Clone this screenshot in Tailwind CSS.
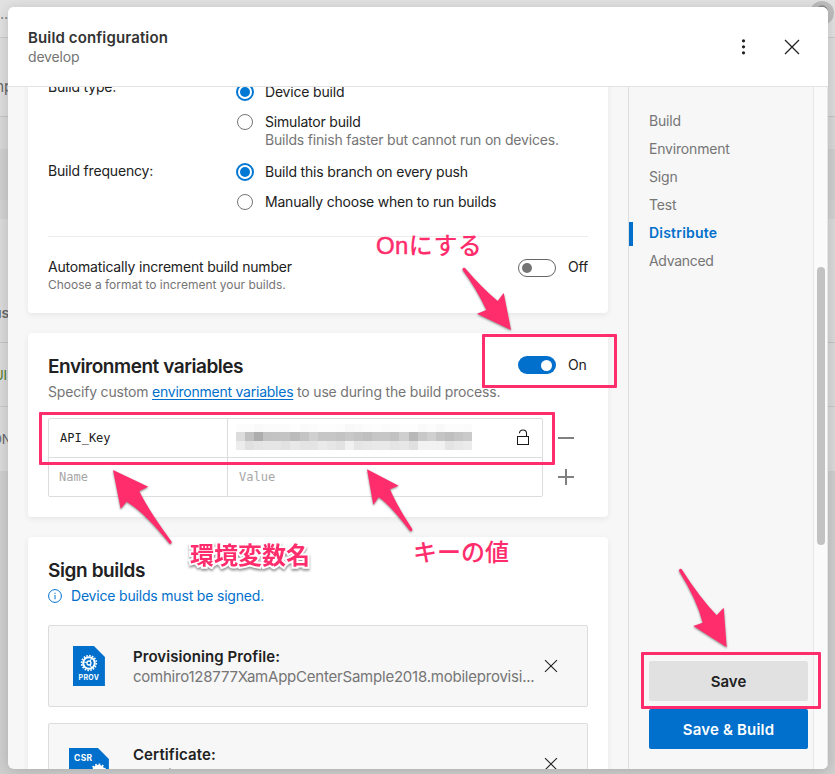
<!DOCTYPE html>
<html lang="ja">
<head>
<meta charset="utf-8">
<title>Build configuration</title>
<script src="https://cdn.jsdelivr.net/npm/@tailwindcss/browser@4"></script>
</head>
<body class="relative w-[835px] h-[774px] overflow-hidden bg-[#c9c9c9] font-['Inter','Noto_Sans_CJK_JP',sans-serif] text-[14px] leading-[18px] tracking-[-0.185px] text-[#212121]">

<!-- Dimmed page behind the dialog -->
<div class="flex flex-col h-full text-[#666]">
  <div class="h-[38px] bg-[#e2e2e2] border-b border-[#cbcbcb] pt-[5px] overflow-hidden"><span class="block -ml-[4px]">…</span></div>
  <div class="h-[79px] bg-[#dedede] border-b border-[#c6c6c6] pt-[40px] overflow-hidden"><span class="block -ml-[9px] text-[15px]">mp</span></div>
  <div class="h-[32px] bg-[#d9d9d9]"></div>
  <div class="h-[51px] bg-[#d0d0d0]"></div>
  <div class="h-[19px] bg-[#d3d3d3]"></div>
  <div class="h-[124px] bg-[#dbdbdb] border-b border-[#c4c4c4] pt-[85px] overflow-hidden"><span class="block -ml-[7px] font-semibold">us</span></div>
  <div class="h-[64px] bg-[#dbdbdb] border-b border-[#c8c8c8] pt-[23px] overflow-hidden"><span class="block -ml-[6px] text-[13px] text-[#4c7a20]">UI</span></div>
  <div class="h-[64px] bg-[#dbdbdb] pt-[23px] overflow-hidden"><span class="block -ml-[8px] text-[13px]">ON</span></div>
  <div class="grow bg-[#cfcfcf]"></div>
</div>
<svg class="absolute left-[811px] top-0" width="24" height="26" viewBox="0 0 24 26"><circle cx="11" cy="13" r="12" fill="#bdbdbd"/><circle cx="11" cy="11" r="5" fill="none" stroke="#8a8a8a" stroke-width="1.5"/></svg>

<!-- Dialog -->
<div class="absolute left-[8px] top-[7px] w-[820px] h-[762px] rounded-[6px] overflow-hidden bg-[#f7f7f7] flex flex-col shadow-[0_2px_14px_rgba(0,0,0,0.17)]">
  <header class="h-[80px] shrink-0 bg-white border-b border-[#e3e3e3] flex justify-between pl-[20px] pr-[28px]">
    <div class="pt-[21px]">
      <h1 class="text-[15px] leading-[20px] font-semibold tracking-[0.13px] text-[#333]">Build configuration</h1>
      <p class="text-[#757575]">develop</p>
    </div>
    <div class="flex items-center gap-[38px]">
      <svg width="5" height="16" viewBox="0 0 5 16" fill="#212121"><circle cx="2.5" cy="1.8" r="1.6"/><circle cx="2.5" cy="7.8" r="1.6"/><circle cx="2.5" cy="13.8" r="1.6"/></svg>
      <svg width="16" height="16" viewBox="0 0 16 16" stroke="#212121" stroke-width="1.3"><path d="M1 1L15 15M15 1L1 15"/></svg>
    </div>
  </header>

  <div class="flex grow min-h-0">
    <main class="w-[620px] overflow-hidden pl-[20px] pr-[20px] flex flex-col gap-[20px]">
      <!-- Build settings -->
      <section class="shrink-0 -mt-[20px] h-[246px] bg-white rounded-[4px] px-[20px] pt-[10px] shadow-[0_2px_6px_rgba(0,0,0,0.07)]">
        <div class="grid grid-cols-[188px_1fr] h-[80px]">
          <div class="pt-px">Build type:</div>
          <div>
            <div class="h-[30px] flex items-center gap-[11px]"><span class="w-[18px] h-[18px] rounded-full border-2 border-[#0078d4] p-[2px]"><span class="block size-full rounded-full bg-[#0078d4]"></span></span>Device build</div>
            <div class="h-[30px] flex items-center gap-[12px] pl-px"><span class="w-[16px] h-[16px] rounded-full border border-[#757575]"></span>Simulator build</div>
            <p class="pl-[29px] -mt-[6px] text-[#757575]">Builds finish faster but cannot run on devices.</p>
          </div>
        </div>
        <div class="grid grid-cols-[188px_1fr] h-[80px] border-b border-[#ececec]">
          <div class="pt-[5px]">Build frequency:</div>
          <div>
            <div class="h-[30px] flex items-center gap-[11px]"><span class="w-[18px] h-[18px] rounded-full border-2 border-[#0078d4] p-[2px]"><span class="block size-full rounded-full bg-[#0078d4]"></span></span>Build this branch on every push</div>
            <div class="h-[30px] flex items-center gap-[12px] pl-px tracking-[-0.21px]"><span class="w-[16px] h-[16px] rounded-full border border-[#757575]"></span>Manually choose when to run builds</div>
          </div>
        </div>
        <div class="flex justify-between pt-[21px]">
          <div>
            <div>Automatically increment build number</div>
            <p class="text-[12px] leading-[17px] tracking-[-0.01px] text-[#757575]">Choose a format to increment your builds.</p>
          </div>
          <div class="flex items-center h-[19px] gap-[12px] w-[70px]">
            <span class="w-[38px] h-[18px] shrink-0 rounded-full border border-[#666] flex items-center pl-[3px]"><span class="size-[10px] rounded-full bg-[#757575]"></span></span><span class="-mt-px">Off</span>
          </div>
        </div>
      </section>

      <!-- Environment variables -->
      <section class="shrink-0 h-[184px] bg-white rounded-[4px] px-[20px] shadow-[0_2px_6px_rgba(0,0,0,0.07)]">
        <div class="flex justify-between pt-[22px]">
          <h2 class="text-[19px] leading-[24px] font-semibold tracking-[-0.46px]">Environment variables</h2>
          <div class="flex items-center h-[20px] gap-[12px] w-[70px]">
            <span class="w-[38px] h-[18px] shrink-0 rounded-full bg-[#0070cc] flex items-center justify-end pr-[4px]"><span class="size-[11px] rounded-full bg-white"></span></span><span class="-mt-px">On</span>
          </div>
        </div>
        <p class="pt-[4px] text-[#757575]">Specify custom <a class="text-[#0070cc] underline underline-offset-2 tracking-[-0.24px]">environment variables</a> to use during the build process.</p>
        <div class="flex pt-[17px] font-['DejaVu_Sans_Mono',monospace] text-[12px] tracking-normal">
          <div class="w-[495px] border border-[#dcdcdc] rounded-[2px] grid grid-cols-[179px_1fr]">
            <div class="h-[39px] border-r border-b border-[#dcdcdc] pl-[11px] flex items-center">API_Key</div>
            <div class="h-[39px] border-b border-[#dcdcdc] pl-[8px] pr-[12px] flex items-center justify-between">
              <svg class="-mt-[2px]" width="254" height="27" viewBox="0 0 254 27" shape-rendering="crispEdges" id="mask"></svg>
              <svg class="-mt-px" width="14" height="17" viewBox="0 0 14 17" fill="none" stroke="#1a1a1a"><rect x="1.5" y="7.5" width="11" height="8"/><path d="M3.5 4.2C3.5 2.2 4.8 1 6.9 1S10.5 2.5 10.5 4.3V7.5" stroke-width="1.1"/></svg>
            </div>
            <div class="h-[38px] border-r border-[#dcdcdc] pl-[10px] flex items-center text-[#a6a6a6]">Name</div>
            <div class="h-[38px] pl-[11px] flex items-center text-[#a6a6a6]">Value</div>
          </div>
          <div class="pl-[15px] flex flex-col">
            <svg class="mt-[11px]" width="16" height="16" viewBox="0 0 16 16" stroke="#808080" stroke-width="2"><path d="M0 9H16"/></svg>
            <svg class="mt-[23px]" width="16" height="17" viewBox="0 0 16 17" stroke="#808080" stroke-width="2"><path d="M0 9H16M8 1V17"/></svg>
          </div>
        </div>
      </section>

      <!-- Signing -->
      <section class="shrink-0 h-[400px] bg-white rounded-[4px] px-[20px] pt-[22px] shadow-[0_2px_6px_rgba(0,0,0,0.07)]">
        <h2 class="text-[19px] leading-[24px] font-semibold tracking-[-0.4px]">Sign builds</h2>
        <div class="flex items-center gap-[9px] pt-[4px] text-[#0070cc]">
          <svg width="14" height="14" viewBox="0 0 14 14" fill="none" stroke="#0070cc"><circle cx="7" cy="7" r="6.4"/><path d="M7 6V10.3M7 3.7V4.9"/></svg>Device builds must be signed.
        </div>
        <div class="mt-[20px] h-[82px] rounded-[2px] border border-[#dcdcdc] bg-[#f7f7f7] flex items-center pl-[24px] pr-[29px]">
          <svg width="32" height="40" viewBox="0 0 32 40"><path d="M0 0H21L32 11V40H0Z" fill="#0070cc"/><g fill="none" stroke="#fff"><circle cx="16" cy="17" r="7.4" stroke-width="1.6" stroke-dasharray="1.6 1.3"/><circle cx="16" cy="17" r="5.8" stroke-width="2"/><circle cx="16" cy="17" r="2" stroke-width="1.3"/><path d="M11 16L14 16.5M17 15L19 12M17 19L19 22" stroke-width="1.1"/></g><text x="16" y="34" text-anchor="middle" font-family="Inter" font-size="7" font-weight="700" letter-spacing=".35" fill="#fff">PROV</text></svg>
          <div class="ml-[28px] pt-[2px] w-[403px] text-[15px] leading-[20px]">
            <div class="font-semibold tracking-[0.08px]">Provisioning Profile:</div>
            <div class="tracking-[-0.22px] whitespace-nowrap text-[#757575]">comhiro128777XamAppCenterSample2018.mobileprovisi...</div>
          </div>
          <svg class="ml-[9px]" width="14" height="14" viewBox="0 0 14 14" stroke="#212121" stroke-width="1.1"><path d="M1 1L13 13M13 1L1 13"/></svg>
        </div>
        <div class="mt-[16px] h-[82px] rounded-[2px] border border-[#dcdcdc] bg-[#f7f7f7] flex items-center pl-[20px] pr-[29px]">
          <svg class="mt-[4px]" width="40" height="36" viewBox="0 0 40 36"><path d="M0 0H29L40 11V36H0Z" fill="#0070cc"/><text x="5" y="12.5" font-family="Inter" font-size="8.5" font-weight="700" letter-spacing=".4" fill="#fff">CSR</text><circle cx="29.5" cy="23" r="6.2" fill="#fff"/><circle cx="29.5" cy="23" r="6.6" fill="none" stroke="#fff" stroke-width="2" stroke-dasharray="1.6 1.86"/></svg>
          <div class="ml-[24px] pt-[2px] w-[403px] text-[15px] leading-[20px]">
            <div class="font-semibold tracking-[0.12px]">Certificate:</div>
            <div class="pt-px -mb-px text-[#757575]">証明書.p12</div>
          </div>
          <svg class="ml-[9px]" width="14" height="14" viewBox="0 0 14 14" stroke="#212121" stroke-width="1.1"><path d="M1 1L13 13M13 1L1 13"/></svg>
        </div>
      </section>
    </main>

    <aside class="w-[185px] border-l border-[#dedede] flex flex-col justify-between pt-[20px] pb-[20px] text-[#757575]">
      <nav class="leading-[28px]">
        <div class="pl-[20px]">Build</div>
        <div class="pl-[20px]">Environment</div>
        <div class="pl-[20px]">Sign</div>
        <div class="pl-[20px]">Test</div>
        <div class="flex items-center font-semibold tracking-[0.22px] text-[#0070cc]"><span class="w-[4px] h-[24px] relative top-px bg-[#0070cc] mr-[16px]"></span>Distribute</div>
        <div class="pl-[20px] tracking-[-0.3px]">Advanced</div>
      </nav>
      <div class="flex flex-col gap-[8px] pl-[20px] pr-[5px] text-[15px] font-semibold">
        <button class="h-[40px] pt-[2px] rounded-[2px] bg-[#e1e1e1] text-[#212121] tracking-[0px]">Save</button>
        <button class="h-[40px] pt-[2px] rounded-[2px] bg-[#0070cc] text-white tracking-[0.17px]">Save &amp; Build</button>
      </div>
    </aside>
    <div class="w-[15px] border-x border-[#e6e6e6] bg-[#fafafa] pt-[180px] flex flex-col items-center">
      <div class="w-[8px] h-[278px] rounded-full bg-[#c2c2c2] ml-px"></div>
    </div>
  </div>
</div>

<!-- Annotations drawn over the dialog -->
<div class="absolute left-[482px] top-[334px] w-[135px] h-[54px] border-[3px] border-[#ff2d6c] rounded-[1px]"></div>
<div class="absolute left-[39px] top-[412px] w-[516px] h-[53px] border-[3px] border-[#ff2d6c] rounded-[1px]"></div>
<div class="absolute left-[641px] top-[652px] w-[180px] h-[57px] border-[3px] border-[#ff2d6c] rounded-[1px]"></div>
<svg class="absolute left-0 top-0 [filter:drop-shadow(0_1px_1px_rgba(0,0,0,0.45))]" width="835" height="774" viewBox="0 0 835 774" fill="#ff2d6c">
  <path d="M462.5 270Q462.5 267 465 268Q482 288 497.7 301L503.7 293L511 330L477 313.7L486.3 310Q476 288 462.5 270Z"/>
  <path d="M679 571Q679 568 681.5 569Q700 598 716.7 615.3L723.7 607.7L726.7 647.3L693.3 626L702.7 622.7Q697 600 679 571Z"/>
  <path d="M367 469.3L398.7 485.7L390 489.3Q396 504 412.3 529Q412.5 532 410 531Q390 505 378.7 497.3L373.3 505Z"/>
  <path d="M113 470L148.3 486.7L139.3 491.3Q149 511 171.5 541.5Q172 544.5 169.5 543.7Q145 513 126.7 501.7L120.7 509Z"/>
</svg>
<div class="absolute left-[376px] top-[229px] font-['Liberation_Sans','Noto_Sans_CJK_JP',sans-serif] font-medium text-[24px] leading-[34px] tracking-[0.4px] whitespace-nowrap text-[#ff2d6c]"><span class="[-webkit-text-stroke:0.5px_#ff2d6c]">On</span>にする</div>
<div class="absolute left-[413px] top-[534px] font-['Noto_Sans_CJK_JP',sans-serif] font-medium text-[24px] leading-[34px] tracking-normal whitespace-nowrap text-[#ff2d6c]">キーの値</div>
<div class="absolute left-[190px] top-[537px] font-['Noto_Sans_CJK_JP',sans-serif] font-bold text-[24px] leading-[34px] tracking-normal whitespace-nowrap text-[#ff2d6c] [-webkit-text-stroke:4px_white] [paint-order:stroke_fill] [filter:drop-shadow(0_2px_1px_rgba(0,0,0,0.4))]">環境変数名</div>

<script>
// Pixelated secret: one grey level per 9px cell, three bands
const bands = [
  [252,252,249,251,251,251,253,250,251,253,253,252,248,250,252,253,251,252,253,253,250,252,249,252,252,251],
  [220,193,173,194,195,196,187,196,208,198,198,195,200,195,191,198,198,194,207,184,200,208,196,191,197,202],
  [236,224,228,230,230,226,232,228,228,234,230,226,241,229,231,233,233,229,231,224,242,242,241,228,232,235]
];
const tops = [[0,8],[8,9],[17,9]];
document.getElementById("mask").innerHTML = bands.map((b, r) => b.map((v, i) =>
  `<rect x="${i * 9.08}" y="${tops[r][0]}" width="9.2" height="${tops[r][1]}" fill="rgb(${v},${v},${v})"/>`).join("")).join("");
</script>
</body>
</html>
